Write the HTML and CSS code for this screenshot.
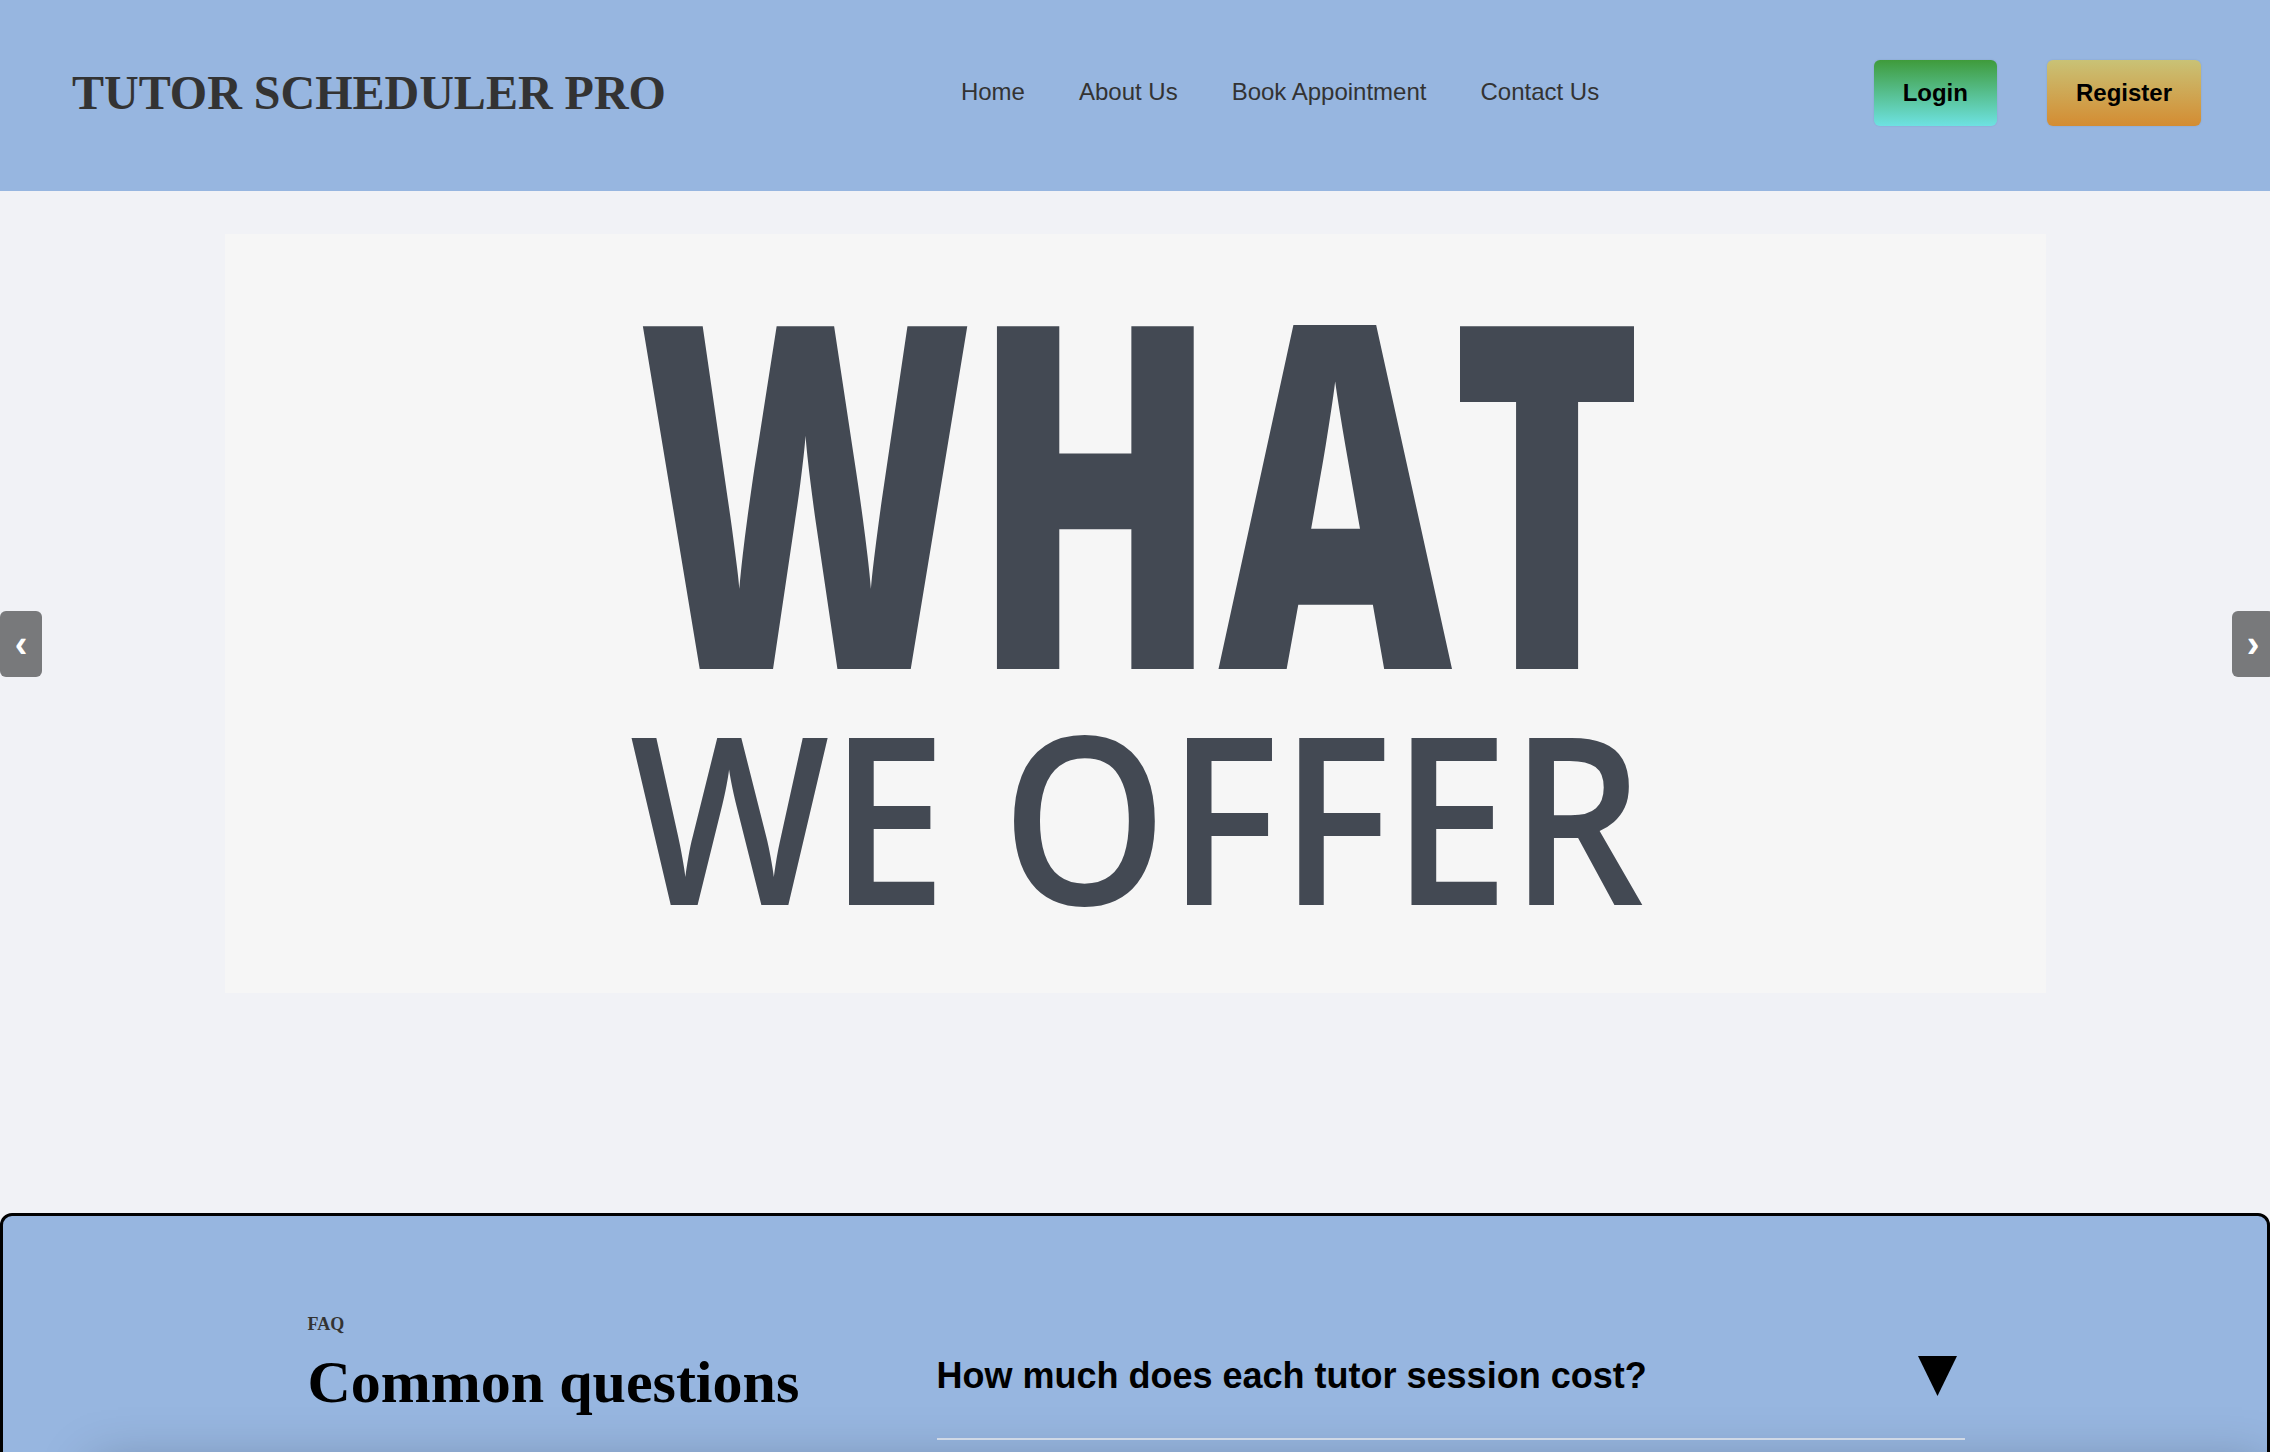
FILE: index.html
```html
<!DOCTYPE html>
<html lang="en">
<head>
<meta charset="utf-8">
<title>Tutor Scheduler Pro</title>
<link rel="stylesheet" href="styles.css">
</head>
<body>
<header class="site-header">
  <h1 class="logo">TUTOR SCHEDULER PRO</h1>
  <nav class="main-nav">
    <a href="#">Home</a>
    <a href="#">About Us</a>
    <a href="#">Book Appointment</a>
    <a href="#">Contact Us</a>
  </nav>
  <div class="auth">
    <button class="btn btn-login">Login</button>
    <button class="btn btn-register">Register</button>
  </div>
</header>

<section class="carousel">
  <div class="slide">
    <svg class="slide-art" viewBox="0 0 1821 759" width="1821" height="759">
      <text class="what" x="413" y="435" textLength="1004" lengthAdjust="spacingAndGlyphs">WHAT</text>
      <text class="offer" x="405" y="671" textLength="1014" lengthAdjust="spacingAndGlyphs">WE OFFER</text>
    </svg>
  </div>
  <button class="arrow arrow-prev">&#8249;</button>
  <button class="arrow arrow-next">&#8250;</button>
</section>

<section class="faq">
  <div class="faq-inner">
    <div class="faq-head">
      <p class="faq-label">FAQ</p>
      <h2 class="faq-title">Common questions</h2>
    </div>
    <div class="faq-list">
      <div class="faq-item">
        <span class="faq-q">How much does each tutor session cost?</span>
        <svg class="faq-toggle" viewBox="0 0 39 40" width="39" height="40"><polygon points="0,0 39,0 19.5,40" fill="#000"/></svg>
      </div>
    </div>
  </div>
  <div class="faq-next"></div>
</section>
</body>
</html>
```

FILE: styles.css
```css
html {
  scrollbar-width: none;
}
html::-webkit-scrollbar {
  display: none;
}
body {
  margin: 0;
  background: #f1f2f6;
  font-family: "Liberation Sans", Arial, sans-serif;
}

.site-header {
  height: 191px;
  box-sizing: border-box;
  background: #97b6e0;
  display: flex;
  align-items: center;
  padding: 0 69px 8px 72px;
}
.logo {
  margin: 0;
  font-family: "Liberation Serif", "Times New Roman", serif;
  font-weight: bold;
  font-size: 48px;
  color: #333;
  line-height: 1;
  position: relative;
  top: 1px;
}
.main-nav {
  display: flex;
  gap: 54px;
  margin-left: 295px;
}
.main-nav a {
  font-size: 24px;
  color: #333;
  text-decoration: none;
}
.auth {
  margin-left: auto;
  display: flex;
  gap: 50px;
}
.btn {
  font-family: "Liberation Sans", Arial, sans-serif;
  font-weight: bold;
  font-size: 24px;
  line-height: 28px;
  padding: 19px 29px;
  border: none;
  border-radius: 6px;
  color: #000;
  box-shadow: 0 0 2px rgba(0, 0, 0, 0.12);
  position: relative;
  top: 1px;
}
.btn-login {
  background: linear-gradient(#3f9b3b, #6ee2e2);
}
.btn-register {
  background: linear-gradient(#c9c276, #d48c32);
}

.carousel {
  position: relative;
  padding: 43px 0 104px;
}
.slide {
  width: 1821px;
  height: 759px;
  margin: 0 auto;
  background: #f6f6f6;
}
.slide-art {
  display: block;
}
.slide-art text {
  font-family: "Open Sans", "Liberation Sans", sans-serif;
  fill: #434953;
}
.what {
  font-size: 480px;
  font-weight: 800;
}
.offer {
  font-size: 234px;
  font-weight: 600;
}
.arrow {
  position: absolute;
  top: 420px;
  width: 42px;
  height: 66px;
  border: none;
  border-radius: 6px;
  background: rgba(0, 0, 0, 0.5);
  color: #fff;
  font-family: "Liberation Sans", Arial, sans-serif;
  font-weight: bold;
  font-size: 38px;
  line-height: 60px;
  padding: 0;
}
.arrow-prev {
  left: 0;
}
.arrow-next {
  right: -4px;
}

.faq {
  margin-top: 116px;
  background: #97b6e0;
  border: 3px solid #000;
  border-radius: 12px;
  padding-top: 98px;
  overflow: hidden;
}
.faq-inner {
  width: 1657px;
  margin: 0 auto;
  display: grid;
  grid-template-columns: 629px 1fr;
  position: relative;
  left: 1px;
}
.faq-label {
  margin: 0 0 13px;
  font-family: "Liberation Serif", "Times New Roman", serif;
  font-weight: bold;
  font-size: 18px;
  color: #333;
}
.faq-title {
  margin: 0;
  font-family: "Liberation Serif", "Times New Roman", serif;
  font-weight: bold;
  font-size: 60px;
  color: #000;
}
.faq-list {
  padding-top: 41px;
}
.faq-item {
  display: flex;
  justify-content: space-between;
  align-items: center;
  padding: 0 8px 41px 0;
  border-bottom: 2px solid #d0d9e6;
}
.faq-q {
  font-weight: bold;
  font-size: 36px;
  color: #000;
}
.faq-toggle {
  display: block;
}
.faq-next {
  height: 200px;
  margin: 24px 0 0 90px;
  background: #97b6e0;
  box-shadow: 0 0 50px rgba(0, 0, 0, 0.25);
}
```
